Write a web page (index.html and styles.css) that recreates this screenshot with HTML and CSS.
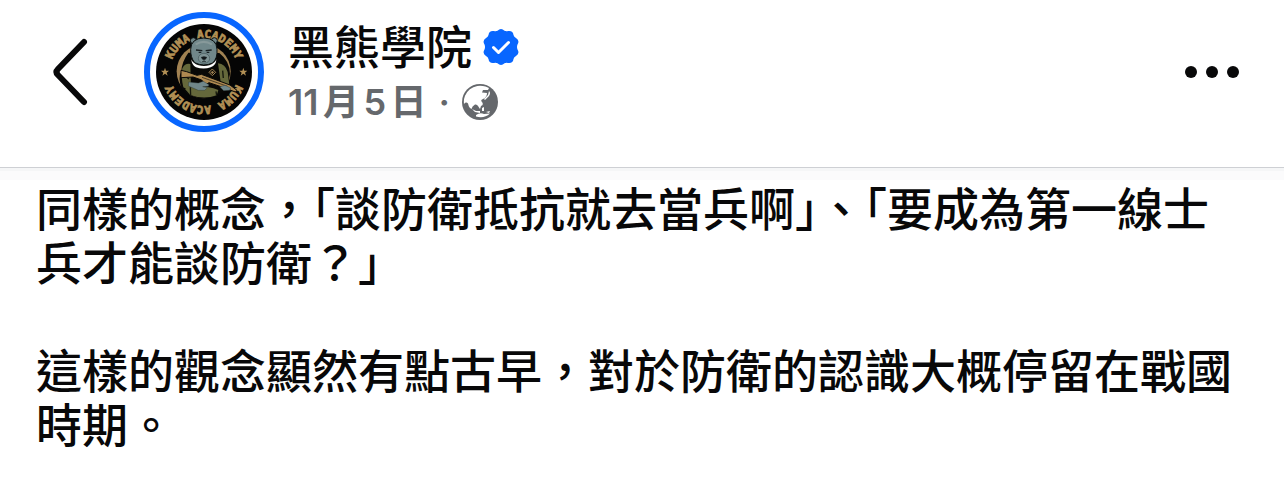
FILE: index.html
```html
<!DOCTYPE html>
<html lang="zh-Hant">
<head>
    <meta charset="UTF-8">
    <meta name="viewport" content="width=device-width, initial-scale=1.0">
    <title>黑熊學院</title>
    <link rel="stylesheet" href="styles.css">
</head>
<body>

<header class="post-header">
    <button class="icon-btn" type="button" aria-label="返回">
        <svg class="back-icon" viewBox="0 0 36 68"><path d="M32 4 L6 31 Q3 34 6 37 L32 64"/></svg>
    </button>

    <!-- Page avatar -->
    <a class="avatar" href="#" aria-label="黑熊學院">
        <svg viewBox="12 12 360 360">
            <defs>
                <path id="ring-top" d="M90 192 A102 102 0 0 1 294 192"/>
                <path id="ring-bottom" d="M294 192 A102 102 0 0 1 90 192"/>
            </defs>
            <circle cx="192" cy="192" r="171" fill="#fff" stroke="#0866ff" stroke-width="18"/>
            <circle cx="192" cy="192" r="144" fill="#050505"/>
            <circle cx="191" cy="190" r="81" fill="#a18252"/>
            <path d="M145 134 Q125 162 124 190 Q112 212 126 244 Q155 272 192 272 Q232 272 262 240 L270 198 Q270 160 238 135z" fill="#080806"/>
            <path d="M127 181 Q135 165 151 168 L153 250 L130 238 Q122 205 127 181zM234 166 Q256 168 263 192 L268 232 L242 222zM135 243 Q180 225 235 246 L230 262 Q192 276 151 261z" fill="#65683b"/>
            <path d="M151 238 L152 263M136 204 L147 213M228 250 L230 263M248 188 L250 210" stroke="#16180d" stroke-width="4"/>
            <text class="ring-text"><textPath href="#ring-top" startOffset="50%">KUMA ACADEMY</textPath></text>
            <text class="ring-text"><textPath href="#ring-bottom" startOffset="50%">KUMA ACADEMY</textPath></text>
            <g fill="#70878a" stroke="#0b1010" stroke-width="3">
                <circle cx="160" cy="98" r="9"/>
                <circle cx="223" cy="98" r="9"/>
                <path d="M152 124 Q153 91 191 90 Q230 91 231 124 Q233 151 218 165 Q191 177 164 164 Q151 148 152 124z"/>
            </g>
            <path d="M165 107 Q191 90 218 107 L214 112 Q191 98 169 112z" fill="#87999a"/>
            <path d="M168 126 L187 128M197 128 L215 126" stroke="#182023" stroke-width="4"/>
            <path d="M176 133 H184M200 133 H208" stroke="#182023" stroke-width="4"/>
            <ellipse cx="192" cy="151" rx="17" ry="15" fill="#7d9294" stroke="#45575a" stroke-width="2"/>
            <path d="M184 148 Q192 144 200 148 L196 154 H188zM192 154 V160M186 161 H198" fill="#111719" stroke="#111719" stroke-width="2"/>
            <path d="M154 154 Q158 166 176 172 Q192 176 208 172 Q226 165 229 154 Q229 172 212 178 Q191 185 168 178 Q155 171 154 154z" fill="#fff"/>
            <path d="M217 183 L227 193 L217 203 L207 193zM217 189 V198M212 193 H222" fill="none" stroke="#a18252" stroke-width="3"/>
            <path d="M123 187 L140 191 L171 202 L184 199 L270 231 L291 247 L286 252 L252 239 L207 224 L197 230 L185 216 L159 207 L123 209z" fill="#ad8951" stroke="#080806" stroke-width="3"/>
            <path d="M186 208 L262 235" stroke="#4b3d25" stroke-width="3"/>
            <path d="M146 222 L175 225 L190 220 L207 230 L205 235 L188 236 L202 239 L194 247 L175 247 L145 234zM239 236 L255 232 L272 240 L269 247 L251 248z" fill="#70878a" stroke="#1d292b" stroke-width="1"/>
            <path id="star" d="M75 179 L78 188 L87 188 L80 194 L83 203 L75 197 L67 203 L70 194 L63 188 L72 188z" fill="#b29055"/>
            <use href="#star" x="235"/>
        </svg>
    </a>

    <div class="author">
        <div class="author-row">
            <h1 class="author-name">黑熊學院</h1>
            <svg class="small-icon" viewBox="0 0 36 36" role="img" aria-label="已驗證">
                <path d="M14.5 1.7 Q18-1.7 21.5 1.7 Q23 2.5 25 2 Q30 1.3 30.5 6 Q31 8 33 9 Q37 11.5 34.5 15.5 Q33.5 18 34.5 20.5 Q37 24.5 33 27 Q31 28 30.5 30 Q30 34.7 25 34 Q23 33.5 21.5 34.3 Q18 37.7 14.5 34.3 Q13 33.5 11 34 Q6 34.7 5.5 30 Q5 28 3 27 Q-1 24.5 1.5 20.5 Q2.5 18 1.5 15.5 Q-1 11.5 3 9 Q5 8 5.5 6 Q6 1.3 11 2 Q13 2.5 14.5 1.7z" fill="#0866ff"/>
                <path d="M10.5 18.5 L15.5 23.5 L25.5 13.5" fill="none" stroke="#fff" stroke-width="3" stroke-linecap="round" stroke-linejoin="round"/>
            </svg>
        </div>
        <div class="meta-row">
            <time>11月5日</time>
            <span class="dot">·</span>
            <svg class="small-icon" viewBox="0 0 36 36" role="img" aria-label="公開">
                <circle cx="18" cy="18" r="18" fill="#65686c"/>
                <path d="M23.5 2.6 A16.2 16.2 0 0 0 2 20 Q4 17.5 6 19.5 Q7 24 9.5 25 Q10 22 13 20.5 Q15 20 16 22 L18 25 L19 22 Q22 21 20 18 Q18 16 21 15 Q25 13 25 9 L20 8.5 L21 6 L26 6 L27 4z" fill="#fff"/>
                <path d="M27 7 Q29 9 27 12 L23 16 L22 15 L26 11zM10 25 L14 27 L18 27 L18 29 L13 28zM20 24 L22 23 L22 27 L20 27zM24 28 L28 27 L27 29zM14 31 Q18 28 22 30 L28 29.5 Q22 35 14 32.5z" fill="#fff"/>
            </svg>
        </div>
    </div>

    <button class="icon-btn" type="button" aria-label="更多">
        <svg class="more-icon" viewBox="0 0 54 12"><circle cx="6" cy="6" r="6"/><circle cx="27" cy="6" r="6"/><circle cx="48" cy="6" r="6"/></svg>
    </button>
</header>

<main class="post-text">
    <p>同樣的概念，<span class="half">「</span>談防衛抵抗就去當兵啊<span class="half">」</span>、<span class="half">「</span>要成為第一線士兵才能談防衛？<span class="half">」</span></p>
    <p>這樣的觀念顯然有點古早，對於防衛的認識大概停留在戰國時期。</p>
</main>

</body>
</html>
```
FILE: styles.css
```css
* {
    box-sizing: border-box;
}
body {
    margin: 0;
    background-color: #fff;
    color: #080809;
    font-family: Inter, "Noto Sans CJK TC", sans-serif;
}
.post-header {
    display: flex;
    align-items: flex-start;
    padding: 12px 45px 35px 52px;
    border-bottom: 1px solid #ced0d4;
}
.icon-btn {
    display: flex;
    align-items: center;
    height: 120px;
    padding: 0;
    border: none;
    background: none;
    cursor: pointer;
}
.back-icon {
    width: 36px;
    height: 68px;
    fill: none;
    stroke: #080809;
    stroke-width: 6;
    stroke-linecap: round;
    stroke-linejoin: round;
}
.more-icon {
    width: 54px;
    height: 12px;
    fill: #080809;
}
.avatar {
    width: 120px;
    height: 120px;
    margin: 0 24px 0 56px;
}
.avatar svg {
    display: block;
}
.ring-text {
    fill: #b29055;
    stroke: #b29055;
    stroke-width: 2;
    font-family: "DejaVu Sans Mono", monospace;
    font-size: 34px;
    font-weight: bold;
    text-anchor: middle;
}
.author {
    flex: 1;
}
.author-row, .meta-row {
    display: flex;
    align-items: center;
}
.author-row {
    height: 70px;
    gap: 11px;
}
.author-name {
    margin: 0;
    font-size: 46px;
    font-weight: 500;
    line-height: 68px;
}
.meta-row {
    height: 40px;
    gap: 12px;
    color: #65686c;
    font-size: 36px;
    font-weight: 600;
    line-height: 40px;
    text-autospace: normal;
}
.small-icon {
    width: 36px;
    height: 36px;
}
/* Post body with a soft shade under the header line */
.post-text {
    padding: 11px 36px;
    background: linear-gradient(#f5f6f7 0, #f5f6f7 3px, #fbfbfc 3px, #fbfbfc 12px, #fff 12px);
    font-family: "Noto Sans CJK TC", sans-serif;
    font-size: 46px;
    font-weight: 500;
    line-height: 54px;
}
.post-text p {
    margin: 0 0 54px;
}
.post-text p:last-child {
    margin-bottom: 0;
}
.half {
    font-feature-settings: "halt";
}
```
